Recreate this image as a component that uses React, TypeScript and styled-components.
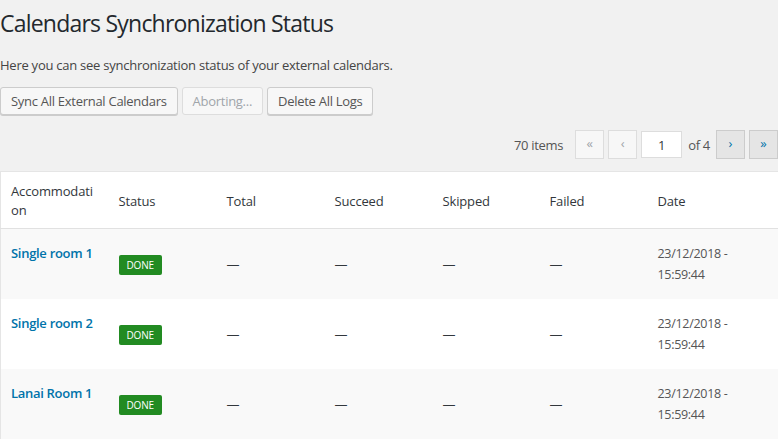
import React from "react";
import styled, { createGlobalStyle } from "styled-components";

const Global = createGlobalStyle`
  html, body { margin: 0; padding: 0; background: #f1f1f1; }
  body {
    font-family: "Open Sans", "Noto Sans", sans-serif;
    font-size: 13px;
    color: #444;
    overflow: hidden;
  }
`;

const Page = styled.div`
  width: 778px;
  height: 439px;
  overflow: hidden;
`;

const Title = styled.h1`
  margin: 0;
  padding: 9px 0 4px;
  font-size: 23px;
  font-weight: 400;
  line-height: 29.9px;
  color: #23282d;
  letter-spacing: -0.78px;
`;

const Intro = styled.p`
  margin: 13px 0 12px;
  font-size: 13px;
  line-height: 19.5px;
  color: #444;
  letter-spacing: -0.25px;
`;

const Actions = styled.div`
  display: flex;
  gap: 4px;
  height: 28px;
`;

const Button = styled.button<{ $disabled?: boolean }>`
  height: 28px;
  box-sizing: border-box;
  padding: 0 10px 1px;
  margin: 0;
  font-family: inherit;
  font-size: 13px;
  line-height: 26px;
  letter-spacing: -0.28px;
  border-radius: 3px;
  border: 1px solid ${(p) => (p.$disabled ? "#ddd" : "#ccc")};
  background: #f7f7f7;
  color: ${(p) => (p.$disabled ? "#a0a5aa" : "#555")};
  box-shadow: ${(p) => (p.$disabled ? "none" : "0 1px 0 #ccc")};
  white-space: nowrap;
`;

const TableNav = styled.div`
  display: flex;
  justify-content: flex-end;
  align-items: center;
  margin: 15px 0 12px;
  height: 29px;
`;

const Count = styled.span`
  font-size: 13px;
  color: #555;
  margin-right: 12px;
  letter-spacing: -0.3px;
`;

const PageBtn = styled.span<{ $active?: boolean }>`
  display: inline-flex;
  align-items: center;
  justify-content: center;
  box-sizing: border-box;
  width: 29px;
  height: 29px;
  border: 1px solid ${(p) => (p.$active ? "#ccc" : "#ddd")};
  background: ${(p) => (p.$active ? "#e5e5e5" : "#f7f7f7")};
  color: ${(p) => (p.$active ? "#0073aa" : "#a0a5aa")};
  font-size: 13px;
  line-height: 1;
  padding-bottom: 2px;
  & + & { margin-left: 4px; }
`;

const PageInput = styled.span`
  display: inline-flex;
  align-items: center;
  justify-content: center;
  box-sizing: border-box;
  width: 41px;
  height: 27px;
  margin-left: 4px;
  background: #fff;
  border: 1px solid #ddd;
  font-size: 13px;
  color: #32373c;
`;

const OfText = styled.span`
  margin: 0 6px 0 6px;
  color: #555;
  font-size: 13px;
  letter-spacing: -0.3px;
`;

const Table = styled.table`
  width: 778px;
  margin-top: 1px;
  border-collapse: collapse;
  table-layout: fixed;
  background: #fff;
  border: 1px solid #e5e5e5;
  box-sizing: border-box;
`;

const Th = styled.th`
  text-align: left;
  font-weight: 400;
  font-size: 13px;
  line-height: 19.5px;
  color: #32373c;
  padding: 9px 10px 7px;
  height: 57px;
  box-sizing: border-box;
  border-bottom: 1px solid #e1e1e1;
  vertical-align: middle;
  word-break: break-all;
  letter-spacing: -0.15px;
`;

const Row = styled.tr<{ $alt?: boolean }>`
  background: ${(p) => (p.$alt ? "#f9f9f9" : "#fff")};
`;

const Td = styled.td<{ $top?: boolean }>`
  height: 70px;
  box-sizing: border-box;
  padding: 14px 10px;
  font-size: 13px;
  line-height: 20px;
  color: #32373c;
  vertical-align: ${(p) => (p.$top ? "top" : "middle")};
  letter-spacing: -0.3px;
`;

const RoomLink = styled.a`
  display: block;
  color: #0073aa;
  font-weight: 600;
  text-decoration: none;
`;

const Badge = styled.span`
  display: inline-block;
  background: #228b22;
  color: #fff;
  font-size: 10px;
  line-height: 20px;
  padding: 0 8px;
  border-radius: 2px;
  text-transform: uppercase;
  margin-top: 2px;
  letter-spacing: -0.2px;
`;

const DateText = styled.span`
  color: #555;
  font-size: 12.5px;
`;

const rows = ["Single room 1", "Single room 2", "Lanai Room 1"];
const widths = [108, 108, 108, 108, 107, 108, 131];

export default function App() {
  return (
    <Page>
      <Global />
      <Title>Calendars Synchronization Status</Title>
      <Intro>Here you can see synchronization status of your external calendars.</Intro>
      <Actions>
        <Button>Sync All External Calendars</Button>
        <Button $disabled>Aborting...</Button>
        <Button>Delete All Logs</Button>
      </Actions>
      <TableNav>
        <Count>70 items</Count>
        <PageBtn>«</PageBtn>
        <PageBtn>‹</PageBtn>
        <PageInput>1</PageInput>
        <OfText>of 4</OfText>
        <PageBtn $active>›</PageBtn>
        <PageBtn $active>»</PageBtn>
      </TableNav>
      <Table>
        <colgroup>
          {widths.map((w, i) => (
            <col key={i} style={{ width: w }} />
          ))}
        </colgroup>
        <thead>
          <tr>
            <Th>Accommodation</Th>
            <Th>Status</Th>
            <Th>Total</Th>
            <Th>Succeed</Th>
            <Th>Skipped</Th>
            <Th>Failed</Th>
            <Th>Date</Th>
          </tr>
        </thead>
        <tbody>
          {rows.map((r, i) => (
            <Row key={r} $alt={i % 2 === 0}>
              <Td $top>
                <RoomLink href="#">{r}</RoomLink>
              </Td>
              <Td>
                <Badge>Done</Badge>
              </Td>
              <Td>—</Td>
              <Td>—</Td>
              <Td>—</Td>
              <Td>—</Td>
              <Td $top>
                <DateText>
                  23/12/2018 -<br />
                  15:59:44
                </DateText>
              </Td>
            </Row>
          ))}
        </tbody>
      </Table>
    </Page>
  );
}
